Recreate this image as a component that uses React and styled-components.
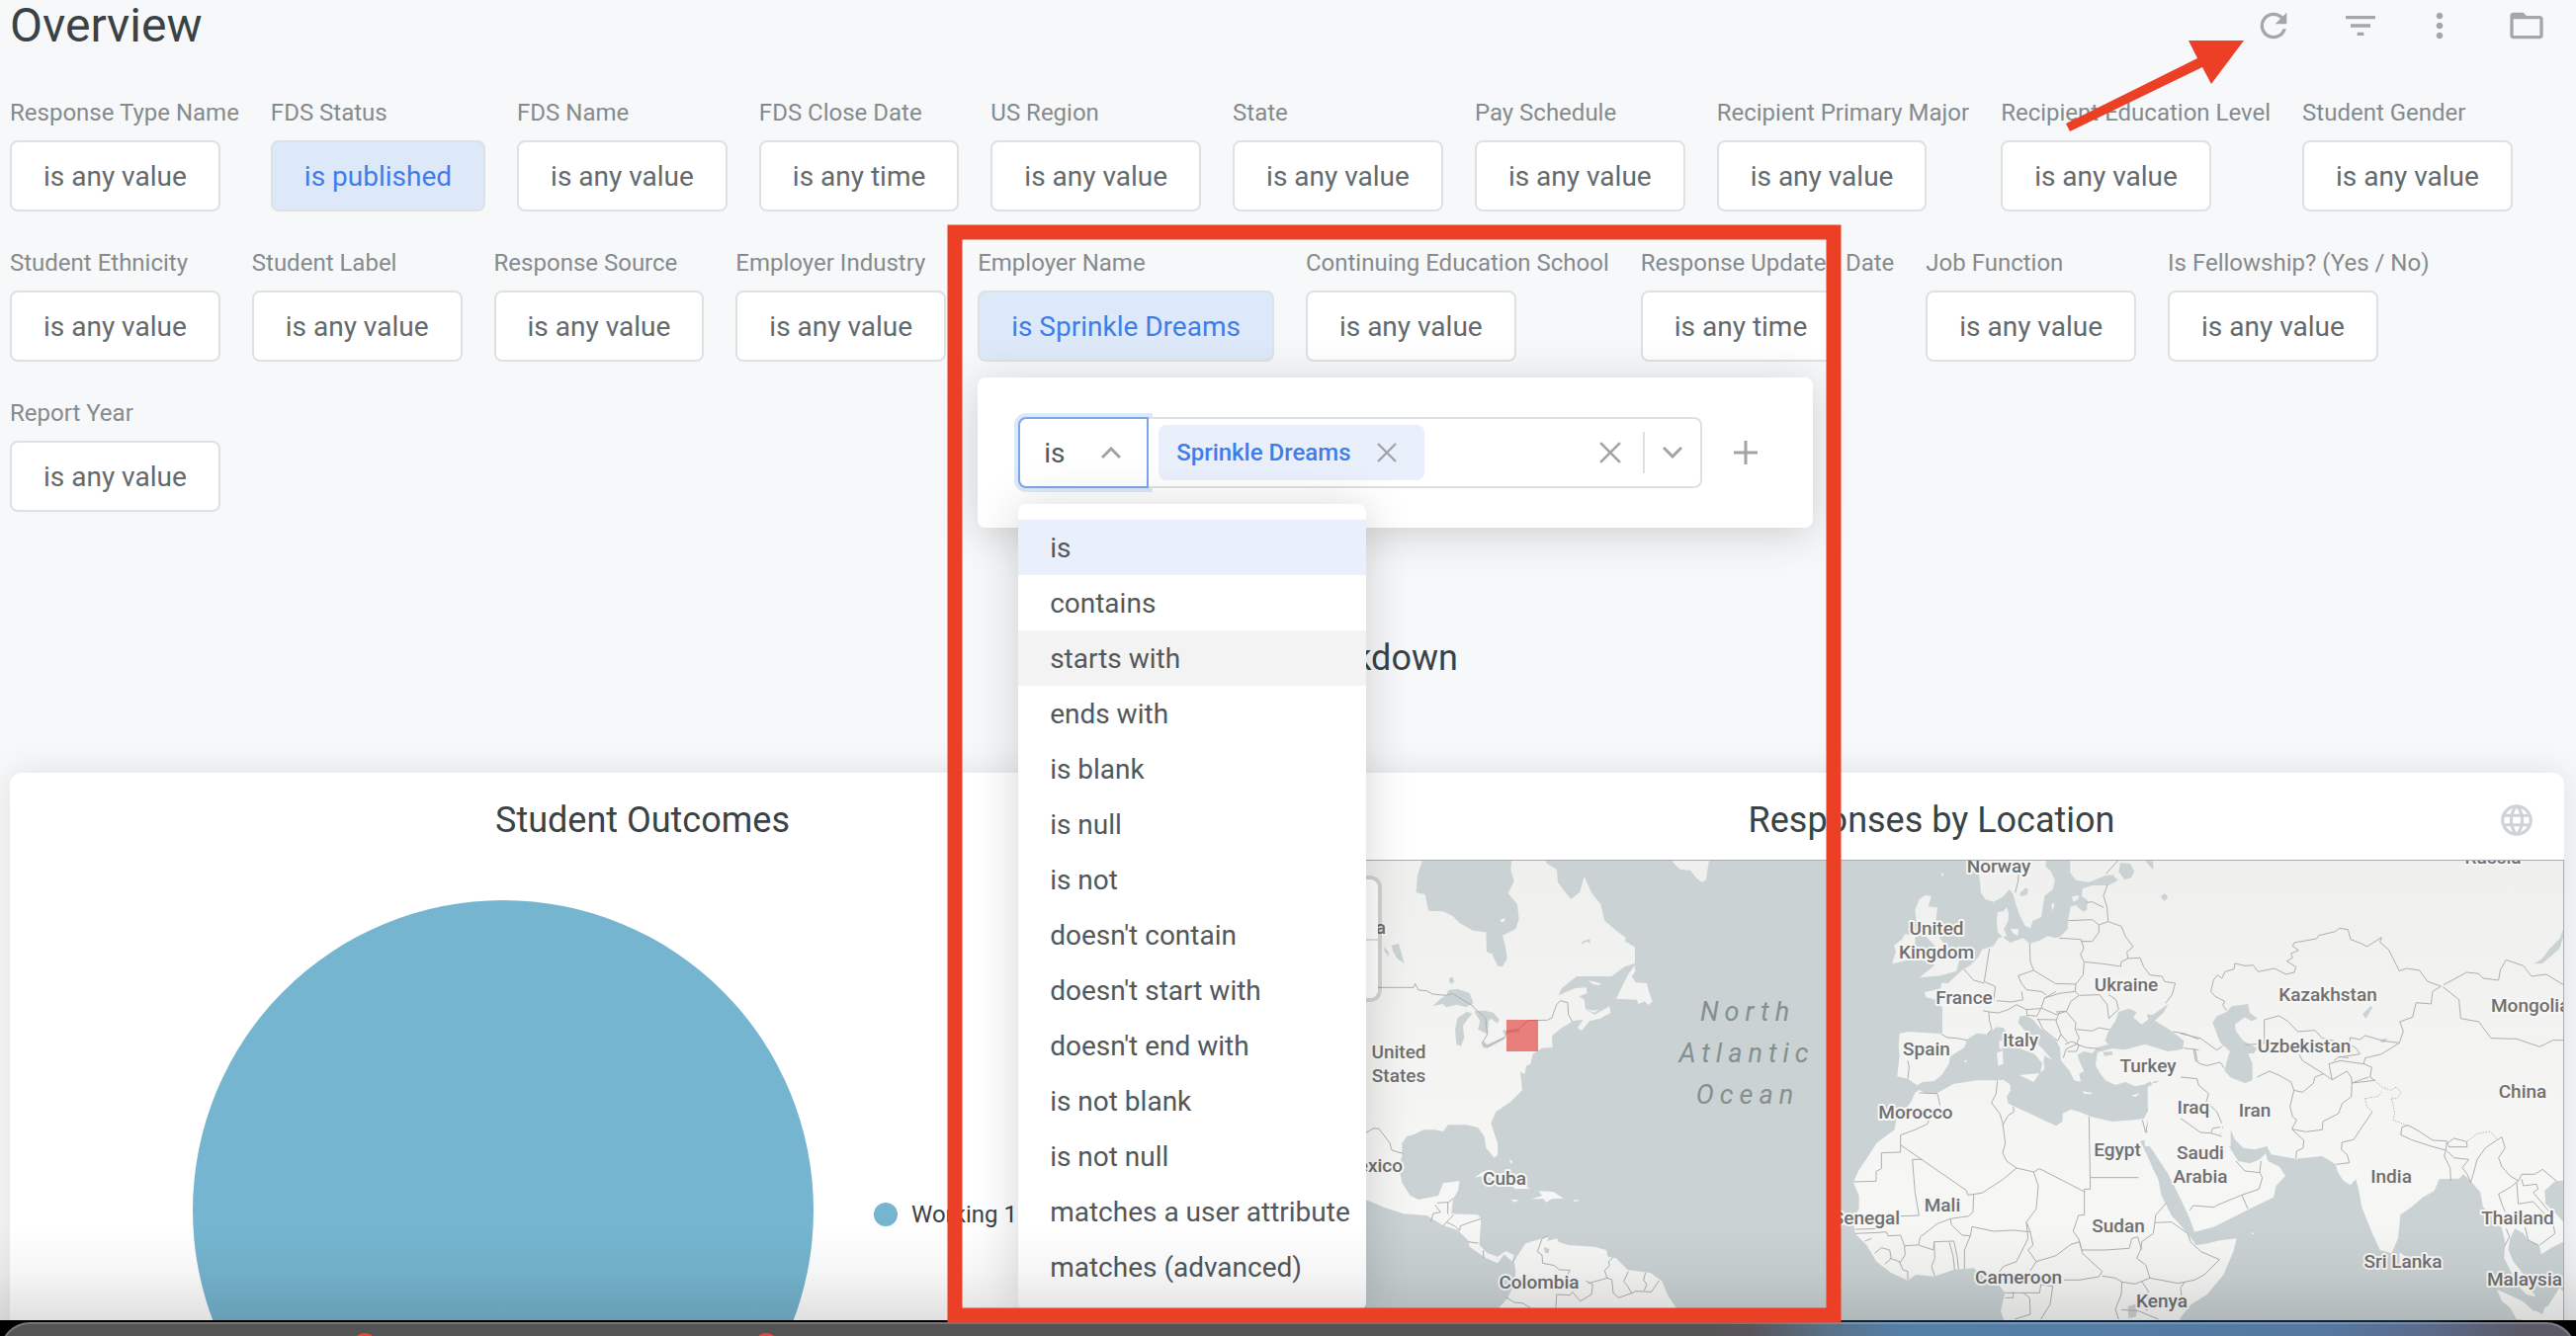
import React, { useState } from 'react'
import styled, { createGlobalStyle, css } from 'styled-components'
import { MdRefresh, MdFilterList, MdMoreVert, MdFolderOpen, MdLanguage } from 'react-icons/md'

const theme = {
  'page': '#f7f8fa',
  'border': '#dee1e2',
  'text': '#50585c',
  'text-dark': '#3a4245',
  'label': '#858b8c',
  'icon': '#a4a7a9',
  'key': '#3f7de8',
  'key-subtle': '#dde8f9',
  'key-light': '#e9f0fb',
  'pie': '#75b5cf',
  'water': '#cad2d3',
  'mark': '#ec4026'
}

const GlobalStyle = createGlobalStyle`
  * {
    box-sizing: border-box;
  }
  body {
    margin: 0;
    background: ${theme['page']};
    font-family: Roboto, "Liberation Sans", sans-serif;
    color: ${theme['text']};
  }
  button, input {
    font-family: inherit;
  }
`

const Screen = styled.div`
  position: relative;
  display: flex;
  flex-direction: column;
  height: 100vh;
  overflow: hidden;
`

const Dashboard = styled.main`
  position: relative;
  flex: 1;
  min-height: 0;
  overflow: hidden;
  padding: 0 12px 0 10px;
  &::after {
    content: "";
    position: absolute;
    left: 0; right: 0; bottom: 0;
    height: 96px;
    z-index: 20;
    pointer-events: none;
    background: linear-gradient(rgba(0, 0, 0, 0), rgba(0, 0, 0, 0.04) 50%, rgba(0, 0, 0, 0.12));
  }
`

const Header = styled.header`
  display: flex;
  align-items: center;
  justify-content: space-between;
  height: 52px;
  padding-right: 18px;
`

const Title = styled.h1`
  margin: 0;
  font-size: 48px;
  line-height: 52px;
  font-weight: 400;
  color: ${theme['text-dark']};
`

const Toolbar = styled.div`
  display: flex;
  gap: 48px;
`

const ToolGroup = styled.div`
  display: flex;
  gap: 40px;
`

const IconButton = styled.button`
  display: flex;
  align-items: center;
  justify-content: center;
  flex: none;
  padding: 0;
  border: none;
  background: none;
  color: ${props => props.$color || theme['icon']};
  svg {
    width: ${props => props.$size || 40}px;
    height: ${props => props.$size || 40}px;
  }
`

const FilterBar = styled.section`
  display: flex;
  flex-wrap: wrap;
  gap: 36px 32px;
  padding-top: 46px;
`

const FilterItem = styled.div`
  position: relative;
  display: flex;
  flex-direction: column;
  align-items: flex-start;
  gap: 12px;
  label {
    font-size: 24px;
    line-height: 32px;
    white-space: nowrap;
    color: ${theme['label']};
  }
`

const FilterButton = styled.button`
  height: 72px;
  padding: 0 32px;
  border: 2px solid ${theme['border']};
  border-radius: 8px;
  background: #fff;
  font-size: 28px;
  white-space: nowrap;
  color: #626a6d;
  ${props => props.$active && css`
    background: ${theme['key-subtle']};
    color: ${theme['key']};
  `}
`

const Popover = styled.div`
  position: absolute;
  top: 100%;
  left: 0;
  z-index: 10;
  display: flex;
  align-items: center;
  gap: 32px;
  width: 845px;
  height: 152px;
  margin-top: 16px;
  padding: 0 41px;
  border-radius: 8px;
  background: #fff;
  box-shadow: 0 6px 44px rgba(0, 0, 0, 0.17);
`

const Condition = styled.div`
  position: relative;
  display: flex;
`

const OperatorButton = styled.button`
  display: flex;
  align-items: center;
  justify-content: space-between;
  width: 132px;
  height: 72px;
  padding: 0 26px 0 24px;
  border: 2px solid #79a6ee;
  border-radius: 8px 0 0 8px;
  background: #fff;
  box-shadow: 0 0 0 4px ${theme['key-subtle']};
  font-size: 28px;
  color: ${theme['text']};
`

const ValueBox = styled.div`
  display: flex;
  align-items: center;
  width: 560px;
  height: 72px;
  padding: 0 18px 0 10px;
  border: 2px solid ${theme['border']};
  border-left: none;
  border-radius: 0 8px 8px 0;
  background: #fff;
  input {
    flex: 1;
    min-width: 0;
    height: 56px;
    border: none;
    outline: none;
    font-size: 28px;
  }
`

const Chip = styled.span`
  display: flex;
  align-items: center;
  gap: 26px;
  height: 56px;
  padding: 0 28px 0 18px;
  border-radius: 8px;
  background: ${theme['key-light']};
  font-size: 24px;
  font-weight: 500;
  white-space: nowrap;
  color: ${theme['key']};
`

const Divider = styled.span`
  width: 2px;
  height: 42px;
  margin: 0 18px 0 22px;
  background: ${theme['border']};
`

const ChevronButton = styled.button`
  display: flex;
  padding: 0;
  border: none;
  background: none;
`

const Menu = styled.ul`
  position: absolute;
  top: 88px;
  left: 0;
  width: 352px;
  margin: 0;
  padding: 16px 0;
  border-radius: 8px;
  background: #fff;
  box-shadow: 0 4px 48px rgba(0, 0, 0, 0.17);
  list-style: none;
`

const MenuItem = styled.li`
  height: 56px;
  padding: 0 32px;
  font-size: 28px;
  line-height: 58px;
  white-space: nowrap;
  background: ${props => props.$selected ? theme['key-light'] : props.$hover ? '#f3f3f3' : '#fff'};
`

const SectionTitle = styled.h2`
  margin: 126px 0 94px;
  font-size: 36px;
  line-height: 44px;
  font-weight: 400;
  text-align: center;
  color: ${theme['text-dark']};
`

const Tiles = styled.section`
  display: grid;
  grid-template-columns: 1fr 1fr;
  gap: 24px;
`

const Tile = styled.article`
  height: 640px;
  border-radius: 12px;
  background: #fff;
  box-shadow: 0 0 36px rgba(0, 0, 0, 0.1);
`

const TileHeader = styled.header`
  position: relative;
  padding: 26px 60px 18px;
  h3 {
    margin: 0;
    font-size: 36px;
    line-height: 44px;
    font-weight: 400;
    text-align: center;
    color: ${theme['text-dark']};
  }
  button {
    position: absolute;
    top: 29px;
    right: 29px;
  }
`

const PieBody = styled.div`
  display: flex;
  align-items: center;
  gap: 61px;
  padding: 41px 0 0 185px;
  svg {
    flex: none;
  }
`

const Legend = styled.div`
  display: flex;
  align-items: center;
  gap: 14px;
  padding-top: 8px;
  font-size: 24px;
  white-space: nowrap;
  color: ${theme['text-dark']};
  &::before {
    content: "";
    width: 24px;
    height: 24px;
    border-radius: 50%;
    background: ${theme['pie']};
  }
`

const MapFrame = styled.div`
  position: relative;
  border-top: 1px solid #a9adaf;
  border-right: 1px solid #a9adaf;
  height: 480px;
  overflow: hidden;
  background: ${theme['water']};
  > svg {
    display: block;
    width: 100%;
    height: 100%;
  }
`

const ZoomControl = styled.div`
  position: absolute;
  top: 19px;
  left: 20px;
  display: flex;
  flex-direction: column;
  width: 60px;
  border-radius: 8px;
  background: #fff;
  box-shadow: 0 0 0 4px rgba(0, 0, 0, 0.12);
  button {
    height: 60px;
    border: none;
    background: none;
    font-size: 28px;
    color: ${theme['text-dark']};
  }
  button + button {
    border-top: 2px solid ${theme['border']};
  }
`

const Dock = styled.footer`
  flex: none;
  height: 16px;
  padding-top: 2px;
  overflow: hidden;
  background: linear-gradient(90deg, #000 60%, #0c2135 72%, #0c2135 94%, #000 97%);
  div {
    position: relative;
    height: 60px;
    border: 2px solid rgba(255, 255, 255, 0.2);
    border-radius: 30px;
    background: linear-gradient(90deg, #545454 66%, #58555a 68%, #587288 71%, #5480a8 74%, #5579a1 90%, #5a6c8c 94%, #5b5a66 98%);
    background-origin: border-box;
  }
`

const Badge = styled.span`
  position: absolute;
  top: 9px;
  left: ${props => props.$left};
  width: 26px;
  height: 26px;
  border-radius: 50%;
  background: #e8483c;
`

const Marks = styled.svg`
  position: absolute;
  top: 0;
  left: 0;
  z-index: 30;
  width: 100%;
  height: 100%;
  pointer-events: none;
`

const filters = [
  { name: 'Response Type Name', value: 'is any value' },
  { name: 'FDS Status', value: 'is published', active: true },
  { name: 'FDS Name', value: 'is any value' },
  { name: 'FDS Close Date', value: 'is any time' },
  { name: 'US Region', value: 'is any value' },
  { name: 'State', value: 'is any value' },
  { name: 'Pay Schedule', value: 'is any value' },
  { name: 'Recipient Primary Major', value: 'is any value' },
  { name: 'Recipient Education Level', value: 'is any value' },
  { name: 'Student Gender', value: 'is any value' },
  { name: 'Student Ethnicity', value: 'is any value' },
  { name: 'Student Label', value: 'is any value' },
  { name: 'Response Source', value: 'is any value' },
  { name: 'Employer Industry', value: 'is any value' },
  { name: 'Employer Name', value: 'is Sprinkle Dreams', active: true, open: true },
  { name: 'Continuing Education School', value: 'is any value' },
  { name: 'Response Updated Date', value: 'is any time' },
  { name: 'Job Function', value: 'is any value' },
  { name: 'Is Fellowship? (Yes / No)', value: 'is any value' },
  { name: 'Report Year', value: 'is any value' }
]

const operators = [
  'is', 'contains', 'starts with', 'ends with', 'is blank', 'is null', 'is not',
  "doesn't contain", "doesn't start with", "doesn't end with", 'is not blank',
  'is not null', 'matches a user attribute', 'matches (advanced)'
]

const Chevron = ({ up }) => (
  <svg width="20" height="12" viewBox="0 0 20 12" fill="none" stroke="#a0a4a6" strokeWidth="3">
    <path d={up ? 'M1 11L10 2L19 11' : 'M1 1L10 10L19 1'} />
  </svg>
)

const Cross = () => (
  <svg viewBox="0 0 20 20" fill="none" stroke="#a0a4a6" strokeWidth="2.4">
    <path d="M1 1L19 19M19 1L1 19" />
  </svg>
)

const Plus = () => (
  <svg viewBox="0 0 24 24" fill="none" stroke="#a0a4a6" strokeWidth="3">
    <path d="M12 0V24M0 12H24" />
  </svg>
)

// filter editor
const FilterEditor = () => {
  const [operator, setOperator] = useState('is')
  const [hover, setHover] = useState('starts with')

  return (
    <Popover>
      <Condition>
        <OperatorButton aria-haspopup="listbox" aria-expanded="true" aria-label="Operator">
          {operator}
          <Chevron up />
        </OperatorButton>
        <ValueBox>
          <Chip>
            Sprinkle Dreams
            <IconButton $size={20} aria-label="Remove"><Cross /></IconButton>
          </Chip>
          <input type="text" aria-label="Employer name value" />
          <IconButton $size={22} aria-label="Clear"><Cross /></IconButton>
          <Divider />
          <ChevronButton aria-label="Show values"><Chevron /></ChevronButton>
        </ValueBox>
        <Menu role="listbox" aria-label="Operator">
          {operators.map(item => (
            <MenuItem
              key={item}
              role="option"
              aria-selected={item === operator}
              $selected={item === operator}
              $hover={item === hover}
              onMouseEnter={() => setHover(item)}
              onClick={() => setOperator(item)}
            >
              {item}
            </MenuItem>
          ))}
        </Menu>
      </Condition>
      <IconButton $size={24} aria-label="Add condition"><Plus /></IconButton>
    </Popover>
  )
}

// land outlines, three map units to a pixel
const americas = [
  'M0 0L178 0L176 36L162 76L158 130L185 135L195 185L240 187L268 200L290 222L330 245L370 250L372 310L388 316L405 352L420 355L434 330L428 290L420 260L460 240L470 210L465 165L437 132L455 95L445 60L450 0L550 0L552 40L585 60L588 98L610 128L628 150L655 128L668 80L690 130L718 165L730 215L765 245L794 266L792 278L822 295L822 345L790 355L752 384L645 384L600 420L590 442L640 420L675 418L676 436L652 445L668 455L672 485L700 500L745 475L748 495L716 512L684 520L660 550L648 540L665 515L635 520L600 540L570 565L572 600L540 602L512 620L505 650L492 656L488 680L474 675L480 730L445 765L400 795L385 830L405 890L406 925L395 935L370 905L365 870L345 843L310 835L255 835L240 855L215 850L180 850L150 865L130 870L115 890L115 930L105 960L115 1010L140 1050L165 1062L225 1050L240 1012L290 1005L285 1035L270 1060L265 1105L345 1108L355 1120L350 1200L375 1225L405 1235L430 1218L455 1230L450 1250L425 1228L405 1255L370 1240L320 1205L315 1185L285 1155L240 1140L190 1110L120 1105L60 1085L0 1060Z',
  'M455 1248L490 1195L540 1180L560 1173L556 1188L585 1180L590 1190L620 1200L700 1205L735 1215L740 1235L765 1240L800 1275L870 1285L905 1310L920 1350L950 1395L960 1480L380 1480L410 1390L435 1362L455 1320L460 1280Z',
  'M820 352L800 380L765 452L828 455L832 468L852 460L862 472L875 460L866 436L858 405L825 403L812 385L824 368Z',
  'M930 0L938 40L960 60L990 62L1008 85L1024 98L1038 92L1042 60L1054 0Z',
  'M335 995L360 978L440 998L505 1028L460 1030L430 1008L360 990Z',
  'M508 1060L540 1050L530 1036L575 1038L605 1058L570 1060L552 1070L545 1060Z',
  'M443 1062L468 1063L460 1070Z',
  'M633 1062L656 1064L640 1068Z',
  'M680 396L720 406L712 412L694 408Z',
  'M672 480L690 488L712 485L700 494L684 490Z',
  'M413 212L428 208L426 218L415 220Z',
  'M440 940L450 945L447 955Z'
]
const americasLakes = [
  'M208 475L228 455L250 440L256 425L285 423L320 435L332 465L310 478L282 470L250 478L238 468Z',
  'M276 545L284 510L312 492L328 497L315 512L300 535L304 570L294 596L280 590Z',
  'M335 490L365 488L392 494L410 515L405 527L385 512L378 520L375 560L345 545L352 520L340 500Z',
  'M358 580L375 590L425 568L427 574L375 602L360 600Z',
  'M420 548L468 543L474 553L425 560Z',
  'M60 295L74 310L75 324L62 308Z',
  'M83 290L105 285L112 310L122 345L100 330L88 308Z',
  'M258 390L268 386L274 398L265 407L258 400Z',
  'M546 1205L563 1213L558 1226L548 1222Z',
  'M660 280L685 270L686 284L676 278L662 286Z'
]
const americasBorders = [
  'M42 418L150 418L155 406L165 426L190 428L208 438L248 442L268 436L330 474L338 484L368 510L374 560L358 588L372 598L428 570L432 552L468 546L498 518L556 517L570 510L584 470L596 458L618 464L620 500L632 522',
  'M0 862L30 845L45 847L78 890L84 912L118 922',
  'M215 1078L232 1100L210 1104L202 1130M222 1072L254 1070L254 1106M254 1072L270 1058M272 1108L250 1130L278 1144L290 1156L292 1142L330 1128L356 1120M240 1142L250 1130M314 1190L346 1194M362 1216L362 1240M450 1250L460 1240',
  'M558 1173L540 1180L526 1220L540 1230L542 1255L578 1262L592 1275L625 1276L612 1300M430 1358L455 1374L480 1376L504 1390M582 1390L584 1350L625 1352L632 1342L656 1370L690 1350L694 1320L672 1308M680 1316L738 1300L730 1278L745 1262L742 1250L755 1238M738 1300L752 1305L756 1345L772 1360L812 1346L800 1325L788 1310L802 1280M812 1346L824 1340L872 1342L895 1308M850 1338L858 1320L848 1305L854 1284'
]
const europeAfrica = [
  'M440 0L455 60L462 130L475 150L500 158L530 142L548 120L560 135L568 165L580 200L596 230L612 238L620 215L645 205L650 175L655 140L680 120L687 92L672 62L658 50L665 0Z',
  'M733 0L733 70L750 92L790 98L840 78L862 76L878 92L850 108L800 108L770 118L768 142L785 152L784 182L772 188L750 168L735 172L728 205L725 240L705 262L690 268L665 262L640 275L610 285L590 268L550 282L525 262L513 250L510 220L512 190L530 186L540 174L546 192L545 215L532 240L540 262L515 268L500 292L465 303L455 325L430 350L405 365L380 388L362 405L342 404L340 420L325 425L290 432L296 448L325 455L345 480L345 555L335 558L240 552L215 558L212 600L215 625L208 688L240 695L268 715L285 705L320 702L342 685L365 650L368 628L412 600L420 575L450 557L480 560L510 538L530 540L545 565L585 605L625 620L648 648L642 678L655 665L652 640L655 625L680 640L650 605L618 572L598 552L575 525L580 505L600 503L620 515L640 540L690 580L702 600L705 640L730 670L745 700L765 704L760 680L775 672L760 640L755 622L775 612L800 618L815 600L850 590L838 580L850 550L870 520L880 492L910 482L935 492L925 510L950 530L970 515L965 500L985 500L1030 468L1018 492L990 518L1040 550L1078 580L1075 605L1030 612L960 590L900 607L860 603L815 615L810 655L825 680L840 700L870 714L900 705L930 718L960 712L975 703L988 720L980 760L965 800L955 820L960 900L1220 900L1220 0Z',
  'M960 815L930 820L860 825L795 810L760 795L735 788L710 800L710 825L690 838L650 820L610 800L565 780L545 770L540 750L552 730L550 712L530 698L505 700L450 700L380 710L330 738L290 738L275 728L262 738L250 765L205 820L200 850L145 890L120 930L90 975L75 1010L92 1050L92 1090L75 1120L80 1165L115 1200L145 1250L190 1285L240 1307L265 1290L320 1295L380 1275L440 1270L470 1295L515 1320L535 1345L522 1400L550 1480L1050 1480L1068 1420L1100 1380L1148 1350L1198 1290L1228 1220L1238 1180L1190 1185L1150 1195L1115 1200L1098 1175L1068 1140L1040 1110L1010 1050L1000 1000L985 970L968 930L945 885L980 875Z',
  'M275 150L262 182L266 215L290 222L294 262L330 300L295 338L322 350L275 388L340 382L388 368L396 335L368 330L345 280L322 240L330 175L302 172L312 140L292 138Z',
  'M232 255L222 272L198 290L204 310L192 346L240 335L262 300L262 262Z',
  'M510 616L528 610L530 650L514 656Z', 'M518 580L528 580L526 606L518 602Z', 'M578 684L640 678L622 705Z',
  'M770 733L800 738L798 742L774 740Z', 'M918 746L946 737L932 750Z', 'M552 240L576 240L574 262L558 252Z',
  'M675 165L686 162L680 186Z', 'M738 142L760 138L758 150L742 158Z', 'M340 70L348 72L345 84Z', 'M410 640L420 638L416 646Z'
]
const europeLakes = [
  'M885 40L915 42L928 65L918 85L898 90L880 66Z', 'M958 30L985 35L985 60L975 50Z',
  'M580 132L598 115L606 122L602 135L584 142Z', 'M1008 142L1020 132L1030 145L1018 156Z',
  'M832 614L860 612L862 622L838 626Z', 'M908 1386L940 1376L932 1418L910 1422Z'
]
const europeBorders = [
  'M580 0L575 95L566 130M880 30L842 72M846 106L834 140L845 175L848 218L820 228L800 212L728 215M780 160L800 158L834 175M848 218L888 232L900 262L924 294L905 310L908 330L888 340L886 354L832 346L775 340L764 318L774 300L766 272L700 268M766 278L800 278L820 250L820 228M908 330L945 328L956 355L975 380L1012 384L1020 400L1052 405L1042 440L1022 466',
  'M610 285L612 340L622 366L688 406L750 408L748 430L760 442L735 460L722 490L690 500L645 480L655 450L690 430M775 342L772 380L750 408M622 366L575 382L585 405L600 425L645 430L660 440M748 430L700 436L655 450M585 430L590 455L555 462L510 458M642 482L600 485L570 470L545 485L515 495L486 492L488 520L495 545L482 560M488 300L480 350L472 400L506 415L500 460M472 405L440 396L410 362M486 492L468 488M645 480L632 505L602 502L600 482M632 515L690 516M635 512L650 545L695 580L705 560L690 520L700 492M720 490L750 525L748 545L760 570L752 590L720 605L712 632M752 545L800 550L820 540L852 546M820 604L780 600L752 590M718 590L738 582L760 592L752 612L724 612M705 560L725 585M762 442L822 440L845 470L850 512L880 484L872 455L850 440M722 490L690 492',
  'M340 558L360 570L390 572L420 578M240 640L244 660L240 695M1045 552L1080 558L1110 570L1160 590L1195 606M1078 602L1112 606L1120 650L1190 655L1200 640M1112 606L1150 612L1165 650M1120 650L1124 695L1075 696L985 706M1075 698L1070 755L1002 786L978 805M1124 695L1140 700L1150 760L1190 800L1195 845M1030 775L1034 800L1130 858L1190 862M1034 800L1000 815L1012 832L962 858L952 820M965 795L985 745M962 858L975 800',
  'M790 810L794 1030L776 1030L776 1108L758 1110L742 1158L758 1180L768 1215M794 995L940 995M776 1038L640 968L622 978L570 966L530 1000L465 1042L422 1048L418 1034L218 896L218 866L262 850L300 832L306 815M275 738L330 740L338 776M512 700L508 740L494 768L520 802L528 830L536 890L528 920L540 945L570 966M528 836L545 806L562 796L560 780M218 896L218 918L160 920L160 968L144 976L144 1006L76 1008M284 940L254 940L262 1040L274 1110L218 1112M440 1046L438 1100L425 1112L370 1120L372 1138L405 1170L430 1172L412 1215L412 1272M370 1120L330 1135L278 1175L272 1200L318 1215L320 1190L380 1188L390 1235L394 1274M366 1190L378 1235L382 1276M320 1190L322 1240L312 1265L322 1294M622 978L636 1020L630 1090L600 1130L612 1160L560 1155L500 1158L435 1144L430 1172M600 1130L605 1180L570 1250L530 1265L516 1284M612 1160L620 1200L605 1215L630 1250L612 1278M630 1250L690 1232L735 1198L762 1190L770 1225L830 1280L820 1296L760 1306L714 1306M768 1215L840 1215L912 1210L920 1180L938 1175L948 1210L935 1240L962 1260L975 1300L930 1318L890 1312L870 1300L830 1294M975 1300L1060 1316L1110 1306L1140 1290L1186 1244L1130 1220L1098 1190L1090 1165L1040 1130L990 1132L992 1110L1024 1072M990 1132L985 1165L950 1190L948 1215M890 1312L888 1350L870 1395L880 1425M888 1396L940 1400L1000 1425M950 1310L970 1340L965 1400M1080 1312L1068 1330L1076 1396M535 1345L640 1345L644 1320L680 1325L672 1380L644 1425M535 1360L560 1360L560 1342M590 1345L610 1360L612 1410L565 1425',
  'M80 1165L150 1162L175 1160L180 1172L218 1170L230 1202L270 1200M80 1152L160 1150M140 1225L160 1208L185 1215L190 1240L170 1258M185 1240L215 1250L225 1275L240 1280L240 1305M230 1202L232 1230L215 1255M110 1188L130 1180'
]
const asia = [
  'M55 0L1180 0L1180 1005L1138 1005L1105 1035L1108 1075L1140 1105L1165 1135L1165 1188L1125 1208L1095 1228L1088 1200L1055 1185L1040 1165L1015 1150L1000 1180L995 1215L1010 1250L1042 1290L1060 1330L1078 1357L1050 1350L1020 1320L1005 1285L982 1240L985 1190L975 1150L950 1110L918 1085L910 1040L880 1005L858 985L845 998L785 1000L770 1035L735 1055L700 1085L667 1108L660 1180L640 1225L605 1215L580 1160L550 1085L542 1040L532 1000L515 1018L495 1005L478 980L470 955L430 930L350 938L275 925L262 900L225 910L190 905L165 880L150 845L128 838L118 860L150 905L175 945L210 952L240 940L258 922L265 945L300 962L318 990L290 1020L282 1055L200 1095L160 1115L100 1145L42 1160L28 1120L0 1060L-40 980L-100 890L-100 720L55 640Z',
  'M960 1335L1000 1352L1040 1372L1072 1400L1115 1385L1150 1330L1164 1345L1164 1440L1110 1440L1060 1430L1020 1425L1000 1390L975 1370Z',
  'M665 1222L690 1240L686 1275L664 1270Z', 'M212 1162L224 1164L220 1168Z'
]
const asiaLakes = [
  'M155 475L205 468L210 495L234 512L215 520L195 508L165 530L168 550L190 580L232 602L222 618L205 618L218 650L218 700L195 708L150 690L133 670L145 625L150 612L120 585L105 545L97 525L110 505L140 492Z',
  'M552 498L578 474L582 480L562 512Z', 'M606 576L628 572L620 584L608 584Z',
  'M1072 346L1098 345L1125 322L1150 300L1162 262L1162 240L1150 270L1120 300L1098 330Z',
  'M1070 1370L1085 1345L1105 1390L1098 1410L1070 1395Z'
]
const asiaBorders = [
  'M140 488L128 472L134 460L105 445L92 430L100 395L112 380L125 390L135 370L162 362L165 345L195 352L220 350L235 370L285 360L320 378L345 372L350 355L322 338L340 328L335 315L358 305L340 292L345 282L412 270L420 260L470 248L482 238L508 242L516 272L550 285L565 294L610 266L605 280L632 304L664 368L685 360L725 366L750 400L790 414L765 430L760 468L715 464L704 508L665 522L676 550L664 586L615 580L560 564L545 576L515 570L512 590L430 572L408 548L356 552L325 520L298 504L254 516L254 588L196 592',
  'M798 410L868 372L905 376L918 390L965 396L970 366L988 334L1040 352L1065 384L1110 378L1162 410M796 416L845 455L850 512L905 522L942 572L1020 574L1090 598L1130 578L1164 578',
  'M360 622L370 640L434 680L408 690L402 710L370 736L344 730L335 705L300 685L270 672L232 690M344 730L332 780L340 810L352 820L338 848L374 882L372 905L352 915L350 936M338 848L380 856L430 850L432 825L480 800L490 770L518 750L520 708L590 700L575 690L580 660L556 650L560 632L610 620L664 586M434 680L460 698L505 672L518 690L520 708L570 690M460 698L450 650L485 640L520 645L556 650M480 630L545 620L530 600L512 590M465 640L482 628L510 632',
  'M582 795L545 850L525 880L490 888L488 910L505 925L512 950L472 955M668 865L672 842L690 836L720 852L765 882L808 884L805 912L760 900L700 880L668 865M810 890L830 876L868 886L870 902L815 902L810 890M805 912L800 930L818 965L820 1005M808 914L830 935L875 940L855 965L870 985L880 1010L888 985L900 940L925 905L962 880L975 872L985 905L965 935L975 962L1000 990L1025 1005L1000 1025L965 1045L975 1075L985 1100M1025 1005L1035 985L1075 985L1098 970L1140 1005M1020 1010L1025 1075L1070 1068L1090 1090L1130 1130L1136 1165L1090 1200M1035 1000L1040 1020L1080 1015L1085 1030L1070 1040L1120 1100M988 1150L998 1175L982 1205M1045 1145L1055 1185L1085 1200',
  'M0 815L60 858L92 860L98 845L120 842M92 860L125 870M0 690L50 695L55 715L85 740L78 765L110 795L125 830M60 650L80 655L120 645L132 662M0 558L60 572L110 608L128 595M40 605L45 640L60 650M168 945L195 975L240 980L248 995L238 1030L186 1048L108 1080L102 1085L38 1080L28 1095M186 1048L204 1090M240 980L244 945'
]
const disputed = 'M590 700L610 720L640 730L655 720L670 738L655 756L640 752L650 800L645 820L690 838M560 755L600 748L612 735M560 755L565 780L582 795M870 885L900 862L940 855L962 880'

const labels = [
  ['Canada', 88, 75, 'end'], ['United', 101, 201], ['States', 101, 225], ['Mexico', 105, 316, 'end'],
  ['Cuba', 208, 329], ['Colombia', 243, 434], ['Norway', 708, 13], ['United', 645, 76], ['Kingdom', 645, 100],
  ['Ukraine', 837, 133], ['France', 673, 146], ['Italy', 730, 189], ['Spain', 635, 198], ['Turkey', 859, 215],
  ['Morocco', 624, 262], ['Iraq', 905, 257], ['Egypt', 828, 300], ['Mali', 651, 356], ['Senegal', 608, 369, 'end'],
  ['Sudan', 829, 377], ['Cameroon', 728, 429], ['Kenya', 873, 453], ['Russia', 1208, 4], ['Kazakhstan', 1041, 143],
  ['Mongolia', 1206, 154, 'start'], ['Uzbekistan', 1017, 195], ['China', 1238, 241], ['Iran', 967, 260],
  ['Saudi', 912, 303], ['Arabia', 912, 327], ['India', 1105, 327], ['Thailand', 1233, 369],
  ['Sri Lanka', 1117, 413], ['Malaysia', 1240, 431]
]

const MapLabels = styled.g`
  font-size: 19px;
  font-weight: 500;
  fill: #707070;
  stroke: #f6f6f5;
  stroke-width: 4px;
  stroke-linejoin: round;
  paint-order: stroke;
`

const OceanLabel = styled.g`
  font-size: 27px;
  font-style: italic;
  letter-spacing: 6px;
  text-anchor: middle;
  fill: #84908f;
`

const Region = ({ x, land, lakes, borders, children }) => (
  <g transform={`translate(${x} -10) scale(0.33333)`}>
    <path d={land.join('')} fill="url(#land)" />
    <path d={lakes.join('')} fill={theme['water']} />
    <path d={borders.join('')} fill="none" stroke="#adaeae" strokeWidth="3" strokeLinejoin="round" />
    {children}
  </g>
)

const WorldMap = () => (
  <svg viewBox="0 1 1279 479" preserveAspectRatio="xMinYMin slice">
    <defs>
      <linearGradient id="land" gradientUnits="userSpaceOnUse" x1="0" y1="0" x2="0" y2="1000">
        <stop offset="0" stopColor="#efefed" />
        <stop offset="1" stopColor="#f6f6f5" />
      </linearGradient>
    </defs>
    <path d="M0 0H70V345L0 310Z" fill="#f0f0ee" />
    <Region x={66} land={americas} lakes={americasLakes} borders={americasBorders}>
      <rect x="432" y="516" width="96" height="96" fill="#e23d38" fillOpacity="0.64" />
    </Region>
    <Region x={536} land={europeAfrica} lakes={europeLakes} borders={europeBorders} />
    <Region x={892} land={asia} lakes={asiaLakes} borders={asiaBorders}>
      <path d={disputed} fill="none" stroke="#b8b9b9" strokeWidth="3" strokeDasharray="5 4" />
    </Region>
    <MapLabels>
      {labels.map(([name, x, y, anchor]) => (
        <text key={name + x + y} x={x} y={y} textAnchor={anchor || 'middle'}>{name}</text>
      ))}
    </MapLabels>
    <OceanLabel>
      <text x="454" y="163">North</text>
      <text x="453" y="205">Atlantic</text>
      <text x="454" y="247">Ocean</text>
    </OceanLabel>
  </svg>
)

const App = () => (
  <Screen>
    <GlobalStyle />
    <Dashboard>
      <Header>
        <Title>Overview</Title>
        <Toolbar>
          <IconButton aria-label="Refresh"><MdRefresh /></IconButton>
          <ToolGroup>
            <IconButton aria-label="Filters"><MdFilterList /></IconButton>
            <IconButton aria-label="More"><MdMoreVert /></IconButton>
          </ToolGroup>
          <IconButton aria-label="Folder"><MdFolderOpen /></IconButton>
        </Toolbar>
      </Header>
      <FilterBar>
        {filters.map((item, index) => (
          <FilterItem key={item.name}>
            <label htmlFor={`filter-${index}`}>{item.name}</label>
            <FilterButton id={`filter-${index}`} $active={item.active}>{item.value}</FilterButton>
            {item.open && <FilterEditor />}
          </FilterItem>
        ))}
      </FilterBar>
      <SectionTitle>Response Breakdown</SectionTitle>
      <Tiles>
        <Tile>
          <TileHeader><h3>Student Outcomes</h3></TileHeader>
          <PieBody>
            <svg width="628" height="628" viewBox="0 0 628 628">
              <circle cx="314" cy="314" r="314" fill={theme['pie']} />
            </svg>
            <Legend>Working 100%</Legend>
          </PieBody>
        </Tile>
        <Tile>
          <TileHeader>
            <h3>Responses by Location</h3>
            <IconButton $size={38} $color="#d0d3d5" aria-label="Time zone"><MdLanguage /></IconButton>
          </TileHeader>
          <MapFrame>
            <WorldMap />
            <ZoomControl>
              <button aria-label="Zoom in">+</button>
              <button aria-label="Zoom out">−</button>
            </ZoomControl>
          </MapFrame>
        </Tile>
      </Tiles>
    </Dashboard>
    <Dock>
      <div>
        <Badge $left="13.6%" />
        <Badge $left="29.2%" />
      </div>
    </Dock>
    <Marks>
      <rect x="966" y="235" width="889" height="1096" fill="none" stroke={theme['mark']} strokeWidth="15" />
      <path d="M2090 125L2223 59L2214 41L2270 41L2237 85L2228 68L2094 133Z" fill={theme['mark']} />
    </Marks>
  </Screen>
)

export default App
